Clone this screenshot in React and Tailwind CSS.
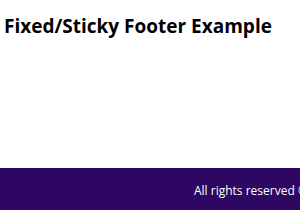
export default function App() {
  return (
    <div className="relative h-[210px] w-[300px] overflow-hidden bg-white" style={{ fontFamily: '"Open Sans", sans-serif' }}>
      <h1 className="m-0 pl-[4px] pt-[14px] text-[19px] font-bold leading-[24px] text-black whitespace-nowrap">
        Fixed/Sticky Footer Example
      </h1>
      <footer className="absolute bottom-0 left-0 h-[42px] w-full bg-[#2e0763] text-white">
        <p className="m-0 pl-[194px] pt-[14px] text-[12px] leading-[18px] whitespace-nowrap">
          All rights reserved © 2024
        </p>
      </footer>
    </div>
  );
}
